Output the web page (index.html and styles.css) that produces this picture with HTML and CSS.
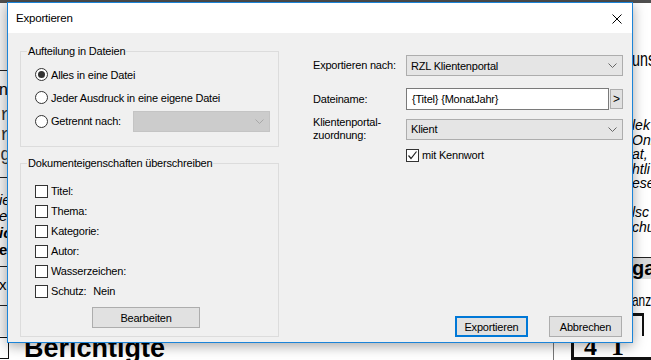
FILE: index.html
```html
<!DOCTYPE html>
<html lang="de">
<head>
  <meta charset="UTF-8">
  <meta name="viewport" content="width=device-width, initial-scale=1.0">
  <title>Exportieren</title>
  <link rel="stylesheet" href="styles.css">
</head>
<body>
  <!-- document behind the dialog -->
  <div class="page">
    <div class="topbar"></div>
    <div class="doc">
      <div class="doc-left">
        <div class="rule rule-a"></div>
        <div class="frag frag-n">n</div>
        <div class="frag mono frag-r1">r</div>
        <div class="frag mono">r</div>
        <div class="frag mono">g</div>
        <div class="rule rule-b"></div>
        <div class="frag ital frag-ie">ie</div>
        <div class="frag ital">e</div>
        <div class="frag ital bold">ic</div>
        <div class="frag bold">ec</div>
        <div class="rule rule-c"></div>
        <div class="frag frag-x">x</div>
        <div class="rule rule-d"></div>
      </div>
      <div class="doc-mid"></div>
      <div class="doc-right">
        <div class="heading">uns</div>
        <div class="para">lek<br>Onl<br>at,<br>htli<br>ese<br>&nbsp;<br>lsc<br>chu</div>
        <div class="band">ga</div>
        <div class="small">anz</div>
        <div class="table-top"></div>
      </div>
    </div>
    <div class="doc-bottom">
      <div class="box"></div>
      <div class="big">Berichtigte</div>
      <div class="vline"></div>
      <div class="cell"><span>4</span><span>1</span></div>
    </div>
  </div>

  <div class="dialog">
    <div class="titlebar">
      <span class="title">Exportieren</span>
      <svg class="close" width="10" height="10" viewBox="0 0 10 10">
        <path d="M0.5 0.5 L9.5 9.5 M9.5 0.5 L0.5 9.5" stroke="#000" stroke-width="1" fill="none"/>
      </svg>
    </div>

    <div class="dialog-body">
      <div class="col-left">
        <fieldset class="group group-split">
          <legend>Aufteilung in Dateien</legend>
          <div class="opt"><span class="radio checked"></span>Alles in eine Datei</div>
          <div class="opt"><span class="radio"></span>Jeder Ausdruck in eine eigene Datei</div>
          <div class="opt opt-last">
            <span class="radio"></span>Getrennt nach:
            <div class="combo combo-disabled">
              <svg width="9" height="5" viewBox="0 0 9 5"><polyline points="0.5,0.5 4.5,4.5 8.5,0.5" fill="none" stroke="#a8a8a8"/></svg>
            </div>
          </div>
        </fieldset>

        <fieldset class="group group-props">
          <legend>Dokumenteigenschaften überschreiben</legend>
          <div class="chk"><span class="checkbox"></span>Titel:</div>
          <div class="chk"><span class="checkbox"></span>Thema:</div>
          <div class="chk"><span class="checkbox"></span>Kategorie:</div>
          <div class="chk"><span class="checkbox"></span>Autor:</div>
          <div class="chk"><span class="checkbox"></span>Wasserzeichen:</div>
          <div class="chk"><span class="checkbox"></span>Schutz:<span class="value">Nein</span></div>
          <button class="btn btn-edit">Bearbeiten</button>
        </fieldset>
      </div>

      <div class="col-right">
        <div class="row row-target">
          <span class="lbl">Exportieren nach:</span>
          <div class="combo"><span>RZL Klientenportal</span>
            <svg width="9" height="5" viewBox="0 0 9 5"><polyline points="0.5,0.5 4.5,4.5 8.5,0.5" fill="none" stroke="#666"/></svg>
          </div>
        </div>
        <div class="row row-name">
          <span class="lbl">Dateiname:</span>
          <div class="namebox">
            <div class="textbox">{Titel} {MonatJahr}</div>
            <button class="btn btn-more">&gt;</button>
          </div>
        </div>
        <div class="row row-assign">
          <span class="lbl">Klientenportal-<br>zuordnung:</span>
          <div class="combo"><span>Klient</span>
            <svg width="9" height="5" viewBox="0 0 9 5"><polyline points="0.5,0.5 4.5,4.5 8.5,0.5" fill="none" stroke="#666"/></svg>
          </div>
        </div>
        <div class="row row-pass">
          <span class="lbl"></span>
          <div class="chk"><span class="checkbox checked">
            <svg width="11" height="11" viewBox="0 0 11 11"><polyline points="1.5,5.5 4,8.5 9.5,1.5" fill="none" stroke="#222" stroke-width="1.2"/></svg>
          </span>mit Kennwort</div>
        </div>

        <div class="actions">
          <button class="btn btn-default">Exportieren</button>
          <button class="btn">Abbrechen</button>
        </div>
      </div>
    </div>
  </div>
</body>
</html>
```

FILE: styles.css
```css
* {
  box-sizing: border-box;
}
body {
  margin: 0;
  width: 651px;
  height: 360px;
  overflow: hidden;
  position: relative;
  background: #fff;
  font-family: "Liberation Sans", Arial, sans-serif;
  color: #000;
}

/* background document */
.page {
  display: grid;
  grid-template-rows: 3px 1fr 24px;
  height: 360px;
}
.topbar {
  background: #4f4f4f;
}
.doc {
  display: grid;
  grid-template-columns: 7px 1fr 18px;
  overflow: hidden;
}
.doc-left {
  overflow: hidden;
  background: #f3f3f3;
  white-space: nowrap;
}
.rule {
  height: 1px;
  background: #222;
  width: 20px;
}
.rule-a { margin-top: 67px; }
.rule-b { margin-top: 12px; }
.rule-c { margin-top: 8px; }
.rule-d { margin-top: 10px; }
.frag {
  font-size: 16px;
  line-height: 20px;
  height: 20px;
  margin-left: -1px;
}
.frag-n { margin-top: 9px; }
.frag-r1 { margin-top: 5px; }
.mono {
  font-family: "Liberation Mono", monospace;
  font-size: 18px;
  margin-left: 0;
  color: #333;
}
.ital {
  font-style: italic;
  font-size: 15px;
  line-height: 16px;
  height: 16px;
}
.frag-ie { margin-top: 14px; }
.bold {
  font-weight: bold;
  font-size: 15px;
  line-height: 17px;
  height: 17px;
}
.frag-x {
  margin-top: 8px;
  font-size: 15px;
}

.doc-right {
  overflow: hidden;
  white-space: nowrap;
}
.heading {
  margin-top: 43px;
  font-size: 21px;
  line-height: 26px;
  margin-left: -1px;
  transform: scaleX(0.68);
  transform-origin: left center;
}
.para {
  margin-top: 46px;
  font-style: italic;
  font-size: 14px;
  line-height: 14.5px;
  margin-left: -1px;
}
.band {
  margin-top: 23px;
  height: 22px;
  border-top: 1px solid #222;
  background: #d9d9d9;
  font-weight: bold;
  font-size: 20px;
  line-height: 20px;
  margin-left: -4px;
  padding-left: 3px;
}
.small {
  margin-top: 13px;
  font-size: 17px;
  line-height: 18px;
  margin-left: -1px;
  transform: scaleX(0.7);
  transform-origin: left center;
}
.table-top {
  margin-top: 3px;
  height: 60px;
  border-top: 3px solid #111;
  border-right: 2px solid #111;
  width: 11px;
}

.doc-bottom {
  display: flex;
  align-items: flex-end;
  overflow: hidden;
}
.box {
  width: 11px;
  height: 22px;
  margin-left: -2px;
  margin-bottom: 1px;
  border: 1.5px solid #111;
}
.big {
  margin-left: 15px;
  font-size: 27px;
  font-weight: bold;
  line-height: 24px;
  height: 24px;
}
.vline {
  margin-left: auto;
  width: 1px;
  height: 20px;
  background: #777;
}
.cell {
  margin-left: 17px;
  width: 80px;
  height: 17px;
  border-left: 3px solid #111;
  border-bottom: 3px solid #111;
  display: flex;
  align-items: flex-end;
  gap: 14px;
  padding-left: 10px;
  font-family: "Liberation Serif", serif;
  font-size: 26px;
  font-weight: bold;
  line-height: 20px;
  overflow: hidden;
}

/* dialog */
.dialog {
  position: absolute;
  left: 7px;
  top: 2px;
  width: 626px;
  height: 341px;
  border: 1px solid #1b84d8;
  background: #f0f0f0;
  box-shadow: 0 3px 12px rgba(0, 0, 0, 0.35);
  display: flex;
  flex-direction: column;
  font-size: 11px;
  letter-spacing: -0.2px;
}
.titlebar {
  height: 30px;
  flex-shrink: 0;
  background: #fff;
  display: flex;
  align-items: center;
  justify-content: space-between;
  padding: 0 10px 0 8px;
}
.title {
  font-size: 11.5px;
}
.close {
  display: block;
  margin-top: 1px;
}
.dialog-body {
  flex: 1;
  display: flex;
  padding: 10px 9px 8px 12px;
}
.col-left {
  width: 259px;
  display: flex;
  flex-direction: column;
  gap: 8px;
}
.group {
  margin: 0;
  padding: 0 8px 0 14px;
  border: 1px solid #dcdcdc;
  min-width: 0;
}
.group legend {
  margin-left: -8px;
  padding: 0 1px;
  line-height: 16px;
}
.group-split {
  height: 104px;
  padding-top: 4px;
}
.group-props {
  height: 182px;
  padding-top: 10px;
}
.opt {
  display: flex;
  align-items: center;
  height: 23px;
}
.opt-last {
  height: 24px;
}
.radio {
  width: 13px;
  height: 13px;
  border: 1px solid #333;
  border-radius: 50%;
  background: #fff;
  margin-right: 3px;
  display: flex;
  align-items: center;
  justify-content: center;
}
.radio.checked::after {
  content: "";
  width: 7px;
  height: 7px;
  border-radius: 50%;
  background: #333;
}
.combo {
  height: 21px;
  border: 1px solid #adadad;
  background: #e5e5e5;
  display: flex;
  align-items: center;
  justify-content: space-between;
  padding: 0 5px 0 4px;
}
.combo svg {
  margin-left: auto;
}
.combo-disabled {
  margin-left: auto;
  width: 137px;
  background: #cccccc;
  border-color: #c4c4c4;
}
.chk {
  display: flex;
  align-items: center;
  height: 20px;
}
.checkbox {
  width: 13px;
  height: 13px;
  border: 1px solid #333;
  background: #fff;
  margin-right: 3px;
  display: flex;
  align-items: center;
  justify-content: center;
}
.value {
  margin-left: 7px;
}
.btn {
  font-family: inherit;
  font-size: 11px;
  letter-spacing: -0.2px;
  color: #000;
  background: #e1e1e1;
  border: 1px solid #adadad;
  height: 21px;
  padding: 0;
  width: 73px;
}
.btn-edit {
  display: block;
  margin: 6px 0 0 57px;
  width: 108px;
}

.col-right {
  margin-left: 34px;
  width: 310px;
  display: flex;
  flex-direction: column;
  padding-top: 12px;
}
.row {
  display: grid;
  grid-template-columns: 93px 217px;
  align-items: center;
}
.lbl {
  line-height: 13px;
}
.row-name {
  margin-top: 12px;
}
.row-assign {
  margin-top: 6px;
}
.row-pass {
  margin-top: 3px;
}
.namebox {
  display: flex;
  align-items: center;
  gap: 1px;
}
.textbox {
  width: 203px;
  height: 22px;
  border: 1px solid #7a7a7a;
  background: #fff;
  line-height: 20px;
  padding-left: 5px;
}
.btn-more {
  width: 13px;
  height: 20px;
  font-size: 12px;
}
.actions {
  margin-top: auto;
  display: flex;
  justify-content: flex-end;
  gap: 21px;
  padding-right: 1px;
}
.btn-default {
  border: 2px solid #0078d7;
}
```
